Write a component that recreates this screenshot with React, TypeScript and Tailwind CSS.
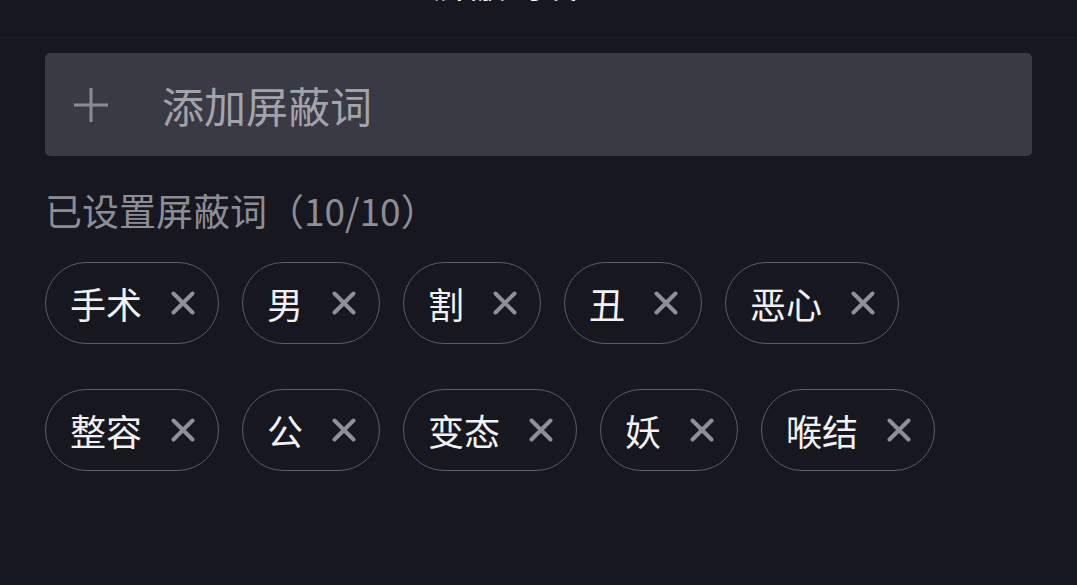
import { ChevronLeft } from 'lucide-react';

const font = { fontFamily: '"Noto Sans CJK SC", "Noto Sans", sans-serif' };

const rows = [
  ['手术', '男', '割', '丑', '恶心'],
  ['整容', '公', '变态', '妖', '喉结'],
];

function Chip({ word }: { word: string }) {
  return (
    <div className="flex h-[82px] items-center rounded-full border border-[#5c5c66] pl-[24px] pr-[23px]">
      <span className="text-[36px] leading-none text-[#f2f2f4]">{word}</span>
      <svg className="ml-[29px] h-[24px] w-[24px]" viewBox="0 0 24 24" fill="none">
        <path d="M2.5 2.5L21.5 21.5M21.5 2.5L2.5 21.5" stroke="#8f8f97" strokeWidth="4" strokeLinecap="round" />
      </svg>
    </div>
  );
}

export default function App() {
  return (
    <div className="min-h-[585px] w-full overflow-hidden bg-[#171720]" style={font}>
      <div className="h-[38px] overflow-hidden border-b border-[#1e1e28]">
        <div className="flex items-end -mt-[50px] h-[50px] px-[30px]">
          <ChevronLeft className="h-[40px] w-[40px] text-white" strokeWidth={3} />
          <div className="flex-1 text-center text-[36px] leading-none text-white pr-[70px]">屏蔽词设置</div>
        </div>
      </div>
      <div className="px-[45px] pt-[15px]">
        <div className="flex h-[103px] items-center rounded-[5px] bg-[#3a3a44] pl-[28px]">
          <svg className="h-[36px] w-[36px]" viewBox="0 0 36 36" fill="none">
            <path d="M18 1V35M1 18H35" stroke="#8b8b93" strokeWidth="3" />
          </svg>
          <span className="ml-[53px] text-[42px] leading-none text-[#a3a3ab]">添加屏蔽词</span>
        </div>
        <div className="mt-[36px] text-[37px] leading-none text-[#8d8d95]">已设置屏蔽词（10/10）</div>
        <div className="mt-[33px] flex flex-col gap-[45px]">
          {rows.map((row, i) => (
            <div key={i} className="flex gap-[23px]">
              {row.map((w) => (
                <Chip key={w} word={w} />
              ))}
            </div>
          ))}
        </div>
      </div>
    </div>
  );
}
